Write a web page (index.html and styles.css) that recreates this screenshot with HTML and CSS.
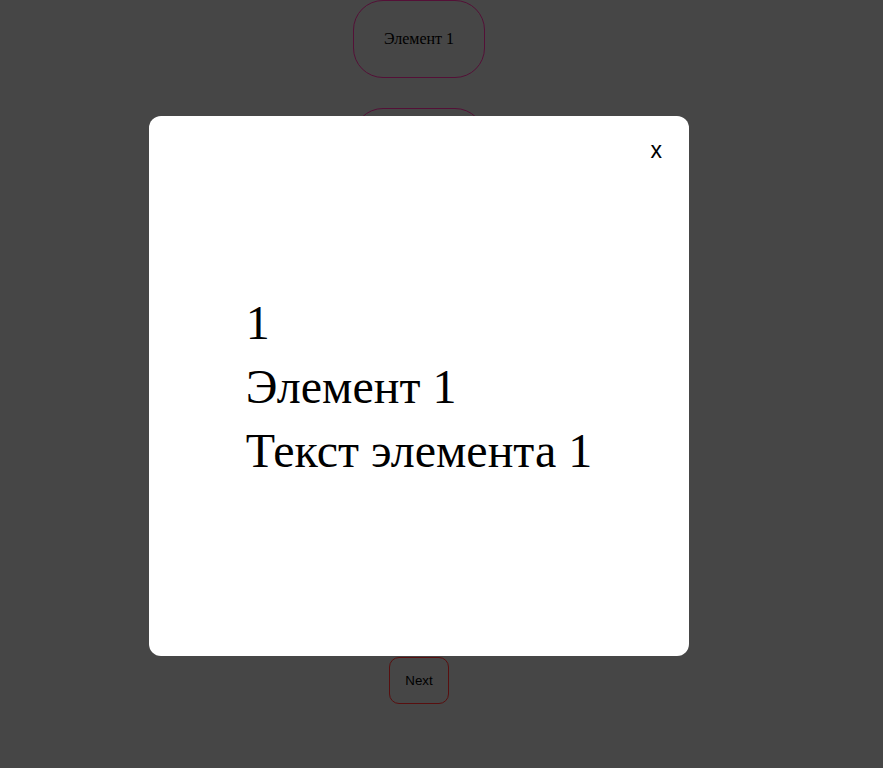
FILE: index.html
```html
<!DOCTYPE html>
<html lang="ru">
<head>
<meta charset="utf-8">
<link rel="stylesheet" href="styles.css">
</head>
<body>
<div class="page">
  <div class="list">
    <div class="item">Элемент 1</div>
    <div class="item">Элемент 2</div>
    <div class="item">Элемент 3</div>
    <div class="item">Элемент 4</div>
    <div class="item">Элемент 5</div>
    <div class="item">Элемент 6</div>
  </div>
  <button class="next">Next</button>
</div>
<div class="overlay">
  <div class="modal">
    <button class="close">x</button>
    <div class="content">
      <div class="line">1</div>
      <div class="line">Элемент 1</div>
      <div class="line">Текст элемента 1</div>
    </div>
  </div>
</div>
</body>
</html>
```
FILE: styles.css
```css
html, body {
  margin: 0;
  padding: 0;
  height: 100%;
  overflow: hidden;
}
body {
  background: #8c8c8c;
  font-family: "Liberation Serif", serif;
}
.page {
  width: 838px;
  display: flex;
  flex-direction: column;
  align-items: center;
}
.list {
  display: flex;
  flex-direction: column;
  align-items: center;
  gap: 30px;
}
.item {
  box-sizing: border-box;
  width: 132px;
  height: 78px;
  border: 1px solid #a8206e;
  border-radius: 30px;
  display: flex;
  align-items: center;
  justify-content: center;
  font-size: 16px;
  color: #000;
}
.next {
  margin-top: 39px;
  box-sizing: border-box;
  width: 60px;
  height: 47px;
  border: 1px solid #b01e1e;
  border-radius: 10px;
  background: transparent;
  font-family: "Liberation Sans", sans-serif;
  font-size: 13.333px;
  color: #000;
}
.overlay {
  position: fixed;
  inset: 0;
  background: rgba(0, 0, 0, 0.5);
}
.modal {
  position: absolute;
  left: 149px;
  top: 116px;
  width: 540px;
  height: 540px;
  background: #fff;
  border-radius: 12px;
  display: flex;
  align-items: center;
  justify-content: center;
}
.close {
  position: absolute;
  top: 21px;
  right: 27px;
  background: none;
  border: none;
  padding: 0;
  font-family: "Liberation Sans", sans-serif;
  font-size: 23px;
  color: #000;
}
.content {
  font-size: 48px;
  color: #000;
}
.line {
  margin: 9px 0;
}
```
